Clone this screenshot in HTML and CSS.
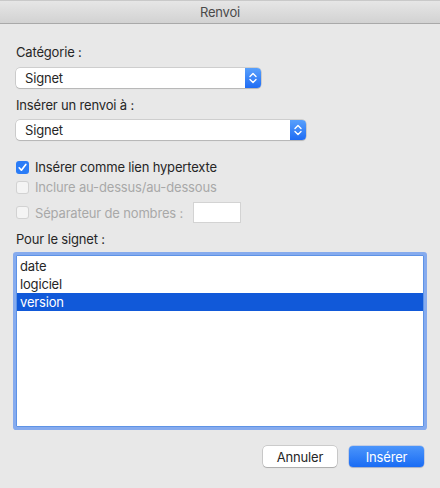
FILE: index.html
```html
<!DOCTYPE html>
<html lang="fr">
<head>
<meta charset="utf-8">
<title>Renvoi</title>
<link rel="stylesheet" href="styles.css">
</head>
<body>
<div class="window">
  <div class="titlebar">Renvoi</div>
  <div class="content">
    <div class="label l1">Catégorie :</div>
    <div class="select s1">
      <span class="select-text">Signet</span>
      <span class="stepper"><svg width="16" height="20" viewBox="0 0 16 20"><path d="M5 8.5 L8 5.5 L11 8.5 M5 11.5 L8 14.5 L11 11.5" fill="none" stroke="#fff" stroke-width="1.4" stroke-linecap="round" stroke-linejoin="round"/></svg></span>
    </div>
    <div class="label l2">Insérer un renvoi à :</div>
    <div class="select s2">
      <span class="select-text">Signet</span>
      <span class="stepper"><svg width="16" height="20" viewBox="0 0 16 20"><path d="M5 8.5 L8 5.5 L11 8.5 M5 11.5 L8 14.5 L11 11.5" fill="none" stroke="#fff" stroke-width="1.4" stroke-linecap="round" stroke-linejoin="round"/></svg></span>
    </div>
    <div class="check c1">
      <span class="box checked"><svg width="13" height="13" viewBox="0 0 13 13"><path d="M3.2 6.8 L5.4 9.2 L9.8 3.4" fill="none" stroke="#fff" stroke-width="1.7" stroke-linecap="round" stroke-linejoin="round"/></svg></span>
      <span>Insérer comme lien hypertexte</span>
    </div>
    <div class="check c2 disabled">
      <span class="box"></span>
      <span>Inclure au-dessus/au-dessous</span>
    </div>
    <div class="check c3 disabled">
      <span class="box"></span>
      <span>Séparateur de nombres :</span>
      <span class="field"></span>
    </div>
    <div class="label l3">Pour le signet :</div>
    <div class="list">
      <div class="row">date</div>
      <div class="row">logiciel</div>
      <div class="row selected">version</div>
    </div>
    <div class="buttons">
      <button class="btn">Annuler</button>
      <button class="btn primary">Insérer</button>
    </div>
  </div>
</div>
</body>
</html>
```
FILE: styles.css
```css
* { box-sizing: border-box; }
html, body { margin: 0; padding: 0; }
body {
  width: 440px;
  height: 488px;
  background: #e8e8e8;
  font-family: Inter, "Liberation Sans", sans-serif;
  font-size: 13px;
  letter-spacing: -0.17px;
  color: #262626;
  overflow: hidden;
}
.window { width: 440px; height: 488px; }
.titlebar {
  height: 24px;
  border-top: 1px solid #c9c9c9;
  border-bottom: 1px solid #a9a9a9;
  background: linear-gradient(#e6e6e6, #d2d2d2);
  text-align: center;
  line-height: 22px;
  color: #4a4a4a;
  font-size: 13px;
}
.content { padding: 0 16px 0 16px; }
.label { height: 16px; line-height: 16px; }
.l1 { margin-top: 20px; }
.select {
  display: flex;
  height: 20px;
  background: #fff;
  border-radius: 4px;
  box-shadow: 0 0 0 0.5px rgba(0,0,0,0.22), 0 1px 1px rgba(0,0,0,0.12);
  align-items: center;
  overflow: hidden;
}
.s1 { margin-top: 8px; width: 245px; }
.l2 { margin-top: 9px; }
.s2 { margin-top: 7px; width: 290px; }
.select-text { flex: 1; padding-left: 9px; line-height: 20px; }
.stepper {
  width: 16px;
  height: 20px;
  background: linear-gradient(#58a0fc, #1f6cf4);
  display: flex;
}
.check {
  display: flex;
  align-items: center;
  height: 20px;
  gap: 6px;
}
.c1 { margin-top: 17px; }
.c2 { margin-top: 0px; }
.c3 { margin-top: 5px; height: 21px; }
.box {
  width: 13px;
  height: 13px;
  border-radius: 3px;
  background: #f4f4f4;
  box-shadow: inset 0 0 0 1px #d2d2d2;
  display: flex;
}
.box.checked { background: #2a7cf7; box-shadow: none; }
.disabled { color: #a8a8a8; }
.field {
  width: 48px;
  height: 21px;
  background: #fff;
  border: 1px solid #d3d3d3;
  margin-left: 4px;
}
.l3 { margin-top: 8px; }
.list {
  margin-top: 8px;
  width: 408px;
  height: 172px;
  background: #fff;
  border: 1px solid #5e93e6;
  box-shadow: 0 0 0 3px #86abee;
  border-radius: 1px;
  padding-top: 1px;
}
.row { height: 18px; line-height: 18px; padding-left: 3px; }
.row.selected { background: #1159d9; color: #fff; }
.buttons {
  margin-top: 19px;
  display: flex;
  justify-content: flex-end;
  gap: 12px;
  padding-right: 0;
  width: 408px;
}
.btn {
  font-family: inherit;
  font-size: 13px;
  letter-spacing: -0.17px;
  height: 21px;
  padding: 0;
  border: none;
  border-radius: 4px;
  background: #fff;
  color: #262626;
  box-shadow: 0 0 0 0.5px rgba(0,0,0,0.25), 0 1px 1px rgba(0,0,0,0.15);
  width: 74px;
}
.btn.primary {
  width: 75px;
  color: #fff;
  background: linear-gradient(#4b95fb, #1a6cf4);
  box-shadow: 0 0 0 0.5px rgba(0,60,200,0.3), 0 1px 1px rgba(0,0,0,0.15);
}
```
